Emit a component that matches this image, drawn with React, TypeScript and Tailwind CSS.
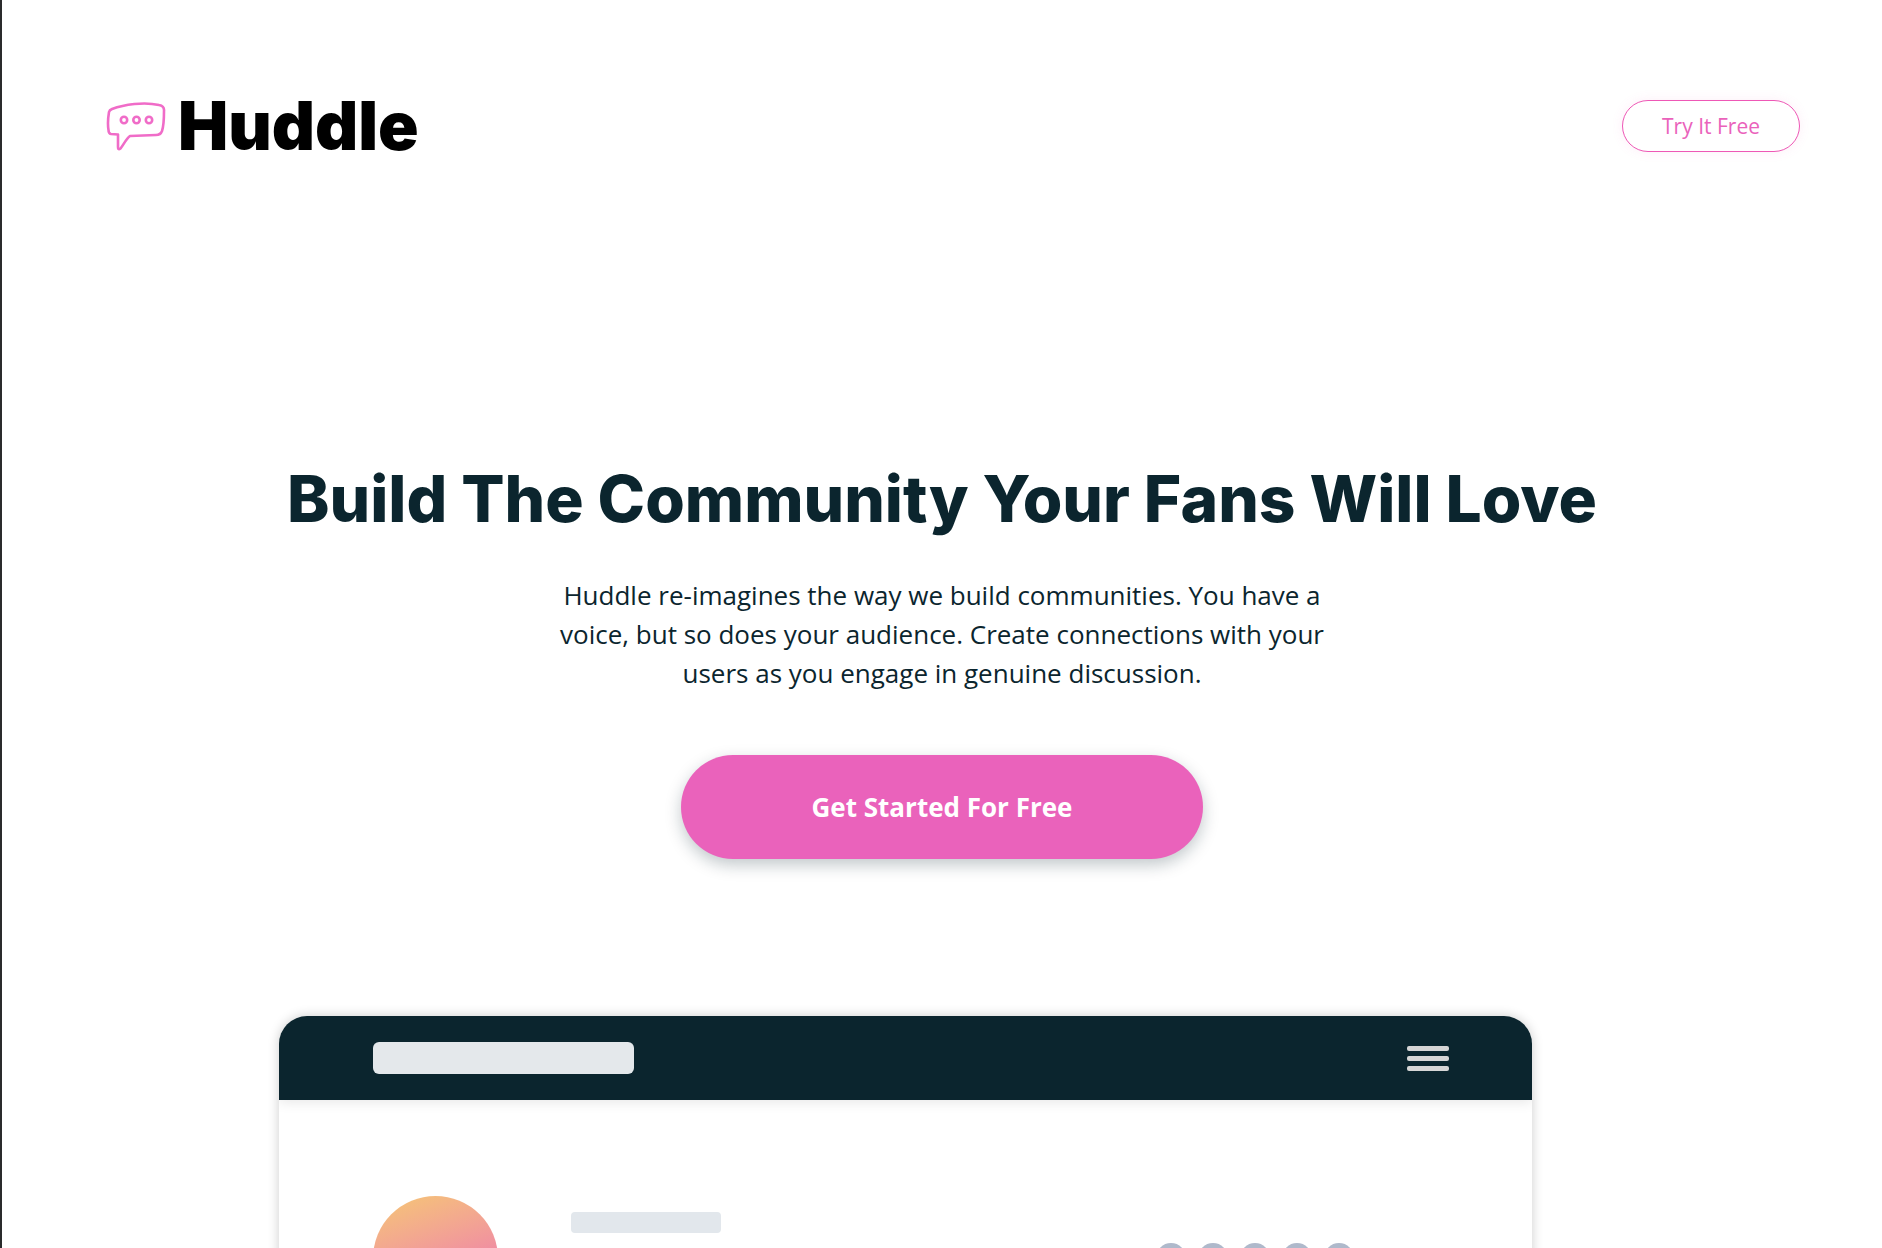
const DOTS = [0, 1, 2, 3, 4];
const LINES = [0, 1, 2];

function Logo() {
  return (
    <a href="#" aria-label="Huddle" className="flex items-center gap-[10px] text-black">
      <svg viewBox="0 0 62 52" className="h-[52px] w-[62px]" fill="none" stroke="#f06cc8" strokeWidth="2.6" strokeLinejoin="round">
        <path d="M6 9C18 4.500 38 1.500 53 5Q58.500 6 58 11C58 20 58 25 56 31Q54.500 35 50 35L24 36C20 39 18 44 14.500 48.500C12.500 50 12 49 12 47V34.500L5 34Q2.500 33.500 2.500 30C1.500 24 2 18 3 12Q3.500 10 6 9Z" />
        <circle cx="18" cy="20" r="3.200" />
        <circle cx="30.500" cy="20" r="3.200" />
        <circle cx="43" cy="20" r="3.200" />
      </svg>
      <span className="font-['Inter',sans-serif] text-[67px] leading-[60px] font-black">Huddle</span>
    </a>
  );
}

function Mockup() {
  return (
    <div className="ml-[277px] w-2/3 overflow-hidden rounded-t-[28px] bg-white shadow-[0_0_12px_rgba(0,0,0,0.2)]">
      <div className="flex h-[84px] items-center justify-between bg-[#0b252e] pr-[83px] pl-[94px] shadow-[0_2px_12px_rgba(0,0,0,0.1)]">
        <div className="h-8 w-[261px] rounded-[6px] bg-[#e4e8eb]" />
        <div className="flex w-[42px] flex-col gap-[5px]">
          {LINES.map((n) => (
            <div key={n} className="h-[5px] rounded-[2px] bg-[#d6d6d6]" />
          ))}
        </div>
      </div>
      <div className="flex items-start px-[94px] pt-24 pb-24">
        <div className="size-[125px] rounded-full bg-linear-160 from-[#f5c277] from-5% to-[#ec6fb0] to-85%" />
        <div className="mt-4 ml-[73px] h-[21px] w-[150px] rounded-[4px] bg-[#e2e7ec]" />
        <div className="mt-[47px] mr-[84px] ml-auto flex gap-3">
          {DOTS.map((n) => (
            <div key={n} className="size-[30px] rounded-full bg-[#afb9cb]" />
          ))}
        </div>
      </div>
    </div>
  );
}

export default function App() {
  return (
    <div className="h-screen overflow-hidden border-l-2 border-[#2a2b2c] bg-white font-['Open_Sans',sans-serif] text-[#0b252e]">
      <header className="flex items-center justify-between pt-24 pr-[82px] pl-[104px]">
        <Logo />
        <button className="h-[52px] w-[178px] rounded-full border border-[#ee58b6] bg-white text-[21px] leading-[28px] text-[#ea62bb] shadow-[0_0_12px_rgba(234,98,187,0.1)]">
          Try It Free
        </button>
      </header>
      <main>
        <section className="flex flex-col items-center pt-[303px] text-center">
          <h1 className="font-['Inter',sans-serif] text-[64px] leading-[80px] font-extrabold">
            Build The Community Your Fans Will Love
          </h1>
          <p className="mt-[37px] w-[800px] text-[26px] leading-[39px]">
            Huddle re-imagines the way we build communities. You have a voice, but so does your audience. Create
            connections with your users as you engage in genuine discussion.
          </p>
          <button className="mt-[62px] h-[104px] w-[522px] rounded-full bg-[#ea62bb] text-[26px] leading-[36px] font-bold text-white shadow-[0_6px_16px_rgba(11,37,46,0.25)]">
            Get Started For Free
          </button>
        </section>
        <section className="pt-[157px]">
          <Mockup />
        </section>
      </main>
    </div>
  );
}
